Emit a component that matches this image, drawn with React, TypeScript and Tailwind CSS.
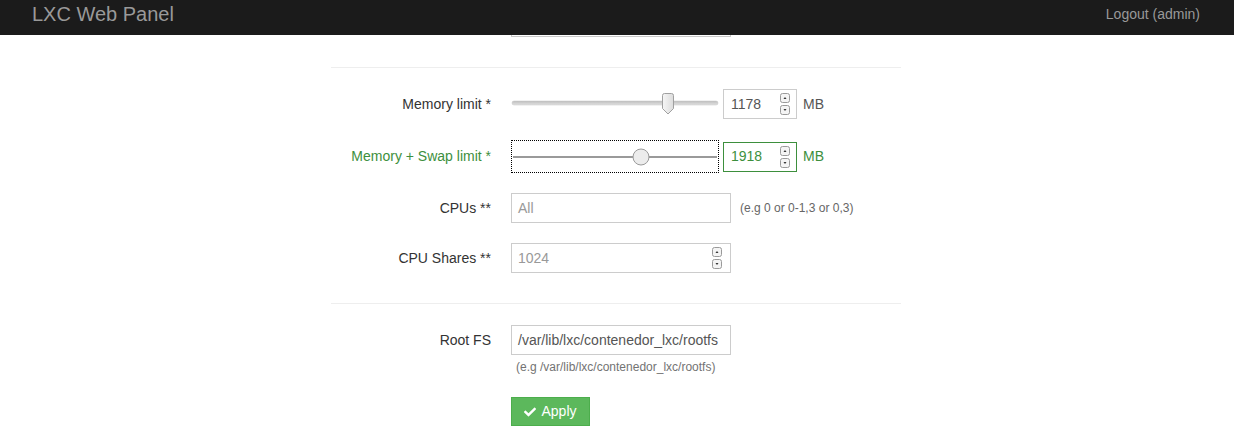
import React from "react";
import { FaCheck } from "react-icons/fa";

function Spinner({ className = "" }: { className?: string }) {
  return (
    <div className={`flex flex-col gap-[2px] ${className}`}>
      <svg width="10" height="10" viewBox="0 0 10 10">
        <rect x="0.5" y="0.5" width="9" height="9" rx="2" fill="#f4f4f4" stroke="#9a9a9a" />
        <path d="M3.5 6 L5 4 L6.5 6 Z" fill="#333" />
      </svg>
      <svg width="10" height="10" viewBox="0 0 10 10">
        <rect x="0.5" y="0.5" width="9" height="9" rx="2" fill="#f4f4f4" stroke="#9a9a9a" />
        <path d="M3.5 4 L5 6 L6.5 4 Z" fill="#333" />
      </svg>
    </div>
  );
}

function Label({ children, green = false }: { children: React.ReactNode; green?: boolean }) {
  return (
    <div
      className={`w-[180px] shrink-0 pr-[20px] text-right text-[14px] ${
        green ? "text-[#3d8f3d]" : "text-[#333]"
      }`}
    >
      {children}
    </div>
  );
}

export default function App() {
  return (
    <div className="min-h-[437px] bg-white" style={{ fontFamily: '"Liberation Sans", Arial, sans-serif' }}>
      {/* navbar */}
      <div className="flex h-[35px] items-center justify-between bg-[#1b1b1b] pb-[7px] pl-[32px] pr-[34px]">
        <span className="text-[20px] text-[#999]">LXC Web Panel</span>
        <span className="text-[14px] text-[#999]">Logout (admin)</span>
      </div>

      <div className="mx-auto w-[572px] pr-[2px]">
        {/* cut-off input bottom */}
        <div className="ml-[180px] h-[2px] w-[220px] border-x border-b border-[#c8c8c8]" />

        <div className="mt-[30px] h-px bg-[#eee]" />

        {/* Memory limit */}
        <div className="mt-[21px] flex h-[30px] items-center">
          <Label>Memory limit *</Label>
          <div className="relative h-[30px] w-[208px]">
            <svg width="208" height="30" viewBox="0 0 208 30" className="absolute left-0 top-0">
              <defs>
                <linearGradient id="trk" x1="0" y1="0" x2="0" y2="1">
                  <stop offset="0" stopColor="#bdbdbd" />
                  <stop offset="1" stopColor="#e2e2e2" />
                </linearGradient>
                <linearGradient id="thm" x1="0" y1="0" x2="1" y2="0">
                  <stop offset="0" stopColor="#f6f6f6" />
                  <stop offset="1" stopColor="#dcdcdc" />
                </linearGradient>
              </defs>
              <rect x="1" y="12" width="206" height="4" rx="2" fill="url(#trk)" stroke="#c4c4c4" strokeWidth="0.5" />
              <path
                d="M151.5 6.5 Q151.5 4.5 153.5 4.5 L160.5 4.5 Q162.5 4.5 162.5 6.5 L162.5 19.5 L157 25 L151.5 19.5 Z"
                fill="url(#thm)"
                stroke="#a0a0a0"
              />
            </svg>
          </div>
          <div className="ml-[4px] flex h-[30px] w-[74px] items-center justify-between border border-[#ccc] pl-[7px] pr-[6px] text-[14px] text-[#555]">
            <span>1178</span>
            <Spinner />
          </div>
          <span className="ml-[6px] text-[14px] text-[#555]">MB</span>
        </div>

        {/* Memory + Swap limit */}
        <div className="mt-[21px] flex h-[33px] items-center">
          <Label green>Memory + Swap limit *</Label>
          <div className="relative h-[33px] w-[208px] border border-dotted border-black">
            <svg width="206" height="31" viewBox="0 0 206 31" className="absolute left-0 top-0">
              <rect x="1" y="15" width="204" height="2" fill="#9a9a9a" />
              <circle cx="129" cy="16" r="8" fill="#ececec" stroke="#9a9a9a" />
            </svg>
          </div>
          <div className="ml-[4px] flex h-[30px] w-[74px] items-center justify-between border border-[#3d8f3d] pl-[7px] pr-[6px] text-[14px] text-[#3d8f3d]">
            <span>1918</span>
            <Spinner />
          </div>
          <span className="ml-[6px] text-[14px] text-[#3d8f3d]">MB</span>
        </div>

        {/* CPUs */}
        <div className="mt-[20px] flex h-[30px] items-center">
          <Label>CPUs **</Label>
          <div className="flex h-[30px] w-[220px] items-center border border-[#ccc] pl-[6px] text-[14px] text-[#999]">
            All
          </div>
          <span className="ml-[9px] text-[12px] text-[#666]">(e.g 0 or 0-1,3 or 0,3)</span>
        </div>

        {/* CPU Shares */}
        <div className="mt-[20px] flex h-[30px] items-center">
          <Label>CPU Shares **</Label>
          <div className="flex h-[30px] w-[220px] items-center justify-between border border-[#ccc] pl-[6px] pr-[8px] text-[14px] text-[#999]">
            <span>1024</span>
            <Spinner />
          </div>
        </div>

        <div className="mt-[30px] h-px bg-[#eee]" />

        {/* Root FS */}
        <div className="mt-[21px] flex">
          <div className="flex h-[30px] items-center">
            <Label>Root FS</Label>
          </div>
          <div>
            <div className="flex h-[30px] w-[220px] items-center overflow-hidden whitespace-nowrap border border-[#ccc] pl-[6px] text-[14px] text-[#555]">
              /var/lib/lxc/contenedor_lxc/rootfs
            </div>
            <div className="mt-[3px] pl-[5px] text-[12px] text-[#737373]">
              (e.g /var/lib/lxc/contenedor_lxc/rootfs)
            </div>
            <button className="mt-[21px] flex h-[29px] w-[79px] items-center justify-center gap-[5px] border border-[#4cae4c] bg-[#5cb85c] text-[14px] text-white">
              <FaCheck className="h-[12px] w-[12px]" />
              Apply
            </button>
          </div>
        </div>
      </div>
    </div>
  );
}
